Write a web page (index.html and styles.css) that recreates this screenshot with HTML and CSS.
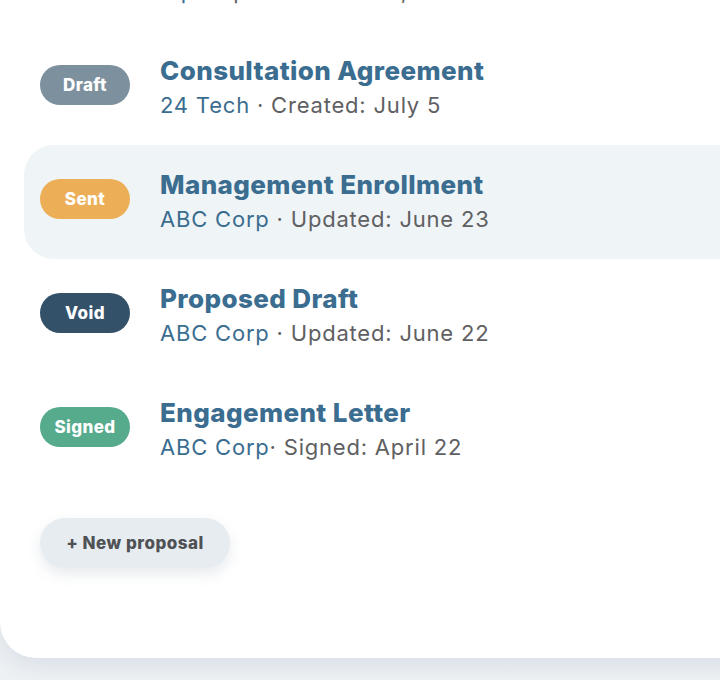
FILE: index.html
```html
<!DOCTYPE html>
<html lang="en">
<head>
<meta charset="utf-8">
<title>Proposals</title>
<link rel="stylesheet" href="styles.css">
</head>
<body>
<main class="card">
  <ul class="list">
    <li class="row">
      <span class="badge badge-sent">Sent</span>
      <div class="info">
        <div class="title">Service Proposal</div>
        <div class="sub"><span class="client">Zip</span> · Updated: June 2, 2024</div>
      </div>
    </li>
    <li class="row">
      <span class="badge badge-draft">Draft</span>
      <div class="info">
        <div class="title">Consultation Agreement</div>
        <div class="sub"><span class="client">24 Tech</span> · Created: July 5</div>
      </div>
    </li>
    <li class="row row-active">
      <span class="badge badge-sent">Sent</span>
      <div class="info">
        <div class="title">Management Enrollment</div>
        <div class="sub"><span class="client">ABC Corp</span> · Updated: June 23</div>
      </div>
    </li>
    <li class="row">
      <span class="badge badge-void">Void</span>
      <div class="info">
        <div class="title">Proposed Draft</div>
        <div class="sub"><span class="client">ABC Corp</span> · Updated: June 22</div>
      </div>
    </li>
    <li class="row">
      <span class="badge badge-signed">Signed</span>
      <div class="info">
        <div class="title">Engagement Letter</div>
        <div class="sub"><span class="client">ABC Corp</span>· Signed: April 22</div>
      </div>
    </li>
  </ul>
  <div class="actions">
    <button class="new-btn" type="button">+ New proposal</button>
  </div>
</main>
</body>
</html>
```

FILE: styles.css
```css
html, body {
  margin: 0;
  padding: 0;
}
body {
  background: linear-gradient(#e6ebef, #eef2f5);
  height: 680px;
  overflow: hidden;
  font-family: Inter, "Open Sans", sans-serif;
}
.card {
  background: #ffffff;
  margin-top: -83px;
  width: 780px;
  border-radius: 0 0 0 36px;
  box-shadow: 0 8px 24px rgba(120, 140, 160, 0.18);
  padding: 0 0 90px 24px;
  box-sizing: border-box;
}
.list {
  list-style: none;
  margin: 0;
  padding: 0;
}
.row {
  display: flex;
  align-items: center;
  gap: 30px;
  height: 114px;
  padding-left: 16px;
  border-radius: 30px 0 0 30px;
}
.row-active {
  background: #eff4f7;
}
.badge {
  flex: none;
  width: 90px;
  height: 40px;
  margin-bottom: 7px;
  border-radius: 20px;
  display: flex;
  align-items: center;
  justify-content: center;
  color: #ffffff;
  font-weight: 800;
  font-size: 17px;
  letter-spacing: 0.4px;
}
.badge-draft { background: #7d909e; }
.badge-sent { background: #ecaf57; }
.badge-void { background: #34516a; }
.badge-signed { background: #55ab8b; }
.info {
  display: flex;
  flex-direction: column;
  gap: 4px;
}
.title {
  color: #3a6d8f;
  font-weight: 800;
  font-size: 26px;
  line-height: 30px;
  letter-spacing: 0.4px;
}
.sub {
  color: #5f6062;
  font-size: 22px;
  line-height: 30px;
  letter-spacing: 0.8px;
}
.client {
  color: #3a6d8f;
}
.actions {
  padding: 31px 0 0 16px;
}
.new-btn {
  font-family: inherit;
  border: none;
  background: #e6ecf0;
  color: #4f5154;
  font-weight: 800;
  font-size: 17px;
  letter-spacing: 0.5px;
  height: 50px;
  width: 190px;
  border-radius: 25px;
  box-shadow: 0 6px 14px rgba(120, 140, 160, 0.18);
  cursor: pointer;
}
```
